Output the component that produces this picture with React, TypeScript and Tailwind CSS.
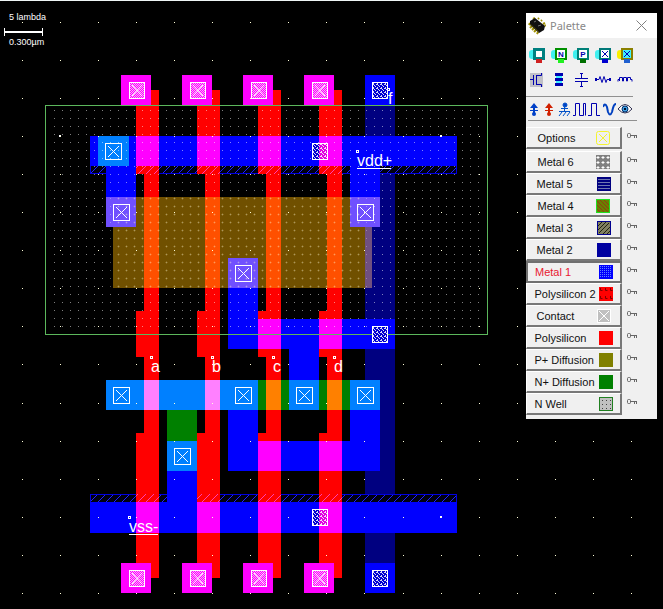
import React from "react";

type Box = [x: number, y: number, w: number, h: number, fill: string];

const COLUMNS = [0, 61, 122, 183];

const RED = "#ff0000";
const BLUE = "#0000ff";
const NAVY = "#000080";
const PINK = "#ff00ff";
const SKY = "#0080ff";
const VIOLET = "#7050ff";
const GREEN = "#008000";

const polysilicon: Box[] = COLUMNS.flatMap((dx): Box[] => [
  [136 + dx, 90, 23, 84, RED],
  [144 + dx, 174, 15, 137, RED],
  [136 + dx, 311, 23, 46, RED],
  [144 + dx, 357, 15, 76, RED],
  [136 + dx, 433, 23, 145, RED],
]);

const metal: Box[] = [
  [106, 166, 30, 31, BLUE],
  [350, 166, 30, 31, BLUE],
  [90, 136, 367, 30, BLUE],
  [228, 288, 30, 61, BLUE],
  [258, 319, 137, 30, BLUE],
  [289, 349, 30, 31, BLUE],
  [228, 410, 30, 61, BLUE],
  [258, 441, 122, 30, BLUE],
  [350, 410, 30, 31, BLUE],
  [167, 471, 30, 31, BLUE],
  [90, 502, 367, 31, BLUE],
  [365, 75, 30, 30, BLUE],
  [365, 563, 30, 30, BLUE],
];

const overlaps: Box[] = [
  ...COLUMNS.flatMap((dx): Box[] => [
    [121 + dx, 75, 30, 30, PINK],
    [121 + dx, 563, 30, 30, PINK],
    [136 + dx, 136, 23, 30, PINK],
    [136 + dx, 502, 23, 31, PINK],
  ]),
  [258, 319, 23, 30, PINK],
  [319, 319, 23, 30, PINK],
  [258, 441, 23, 30, PINK],
  [319, 441, 23, 30, PINK],
  [98, 136, 31, 30, SKY],
];

const diffusion: Box[] = [
  [113, 197, 259, 91, "#705000"],
  [365, 197, 7, 91, "#705080"],
  ...COLUMNS.map((dx): Box => [144 + dx, 197, 15, 91, "#ff5000"]),
  [106, 197, 30, 30, VIOLET],
  [350, 197, 30, 30, VIOLET],
  [228, 258, 30, 30, VIOLET],
  [106, 380, 274, 30, SKY],
  [258, 380, 31, 30, GREEN],
  [319, 380, 31, 30, GREEN],
  [144, 380, 15, 30, "#ff80ff"],
  [205, 380, 15, 30, "#ff80ff"],
  [266, 380, 15, 30, "#ff8000"],
  [327, 380, 15, 30, "#ff8000"],
  [167, 410, 30, 31, GREEN],
  [167, 441, 30, 30, SKY],
];

const contacts = [
  [105, 143], [113, 204], [357, 204], [235, 265],
  [113, 387], [235, 387], [296, 387], [357, 387], [174, 448],
];

const vias = [[372, 82], [312, 143], [372, 326], [312, 509], [372, 570]];

const pins = [
  { name: "a", x: 151, y: 357 },
  { name: "b", x: 212, y: 357 },
  { name: "c", x: 273, y: 357 },
  { name: "d", x: 334, y: 357 },
  { name: "f", x: 388, y: 89 },
  { name: "vdd+", x: 357, y: 151, line: 34 },
  { name: "vss-", x: 129, y: 517, line: 29 },
];

function dots(x0: number, y0: number, step: number, cols: number, rows: number) {
  let d = "";
  for (let r = 0; r < rows; r++)
    for (let c = 0; c < cols; c++)
      d += `M${Math.floor(x0 + c * step)} ${Math.floor(y0 + r * step)}h1v1h-1z`;
  return d;
}

function Boxes({ items }: { items: Box[] }) {
  return (
    <>
      {items.map(([x, y, width, height, fill], i) => (
        <rect key={i} x={x} y={y} width={width} height={height} fill={fill} />
      ))}
    </>
  );
}

function LayoutCanvas() {
  return (
    <svg
      className="block h-screen w-full font-['Liberation_Sans',Arial,sans-serif]"
      role="img"
      aria-label="Mask layout"
      shapeRendering="crispEdges"
    >
      <defs>
        <pattern id="hatch" width="8" height="8" patternUnits="userSpaceOnUse">
          <path d="M-1 9L9 -1" stroke="#2020ff" shapeRendering="auto" />
        </pattern>
        <pattern id="hatchRed" width="8" height="8" patternUnits="userSpaceOnUse">
          <path d="M-1 9L9 -1" stroke="#ff40b0" shapeRendering="auto" />
        </pattern>
        <pattern id="weave" width="2" height="2" patternUnits="userSpaceOnUse">
          <path d="M0 0h1v1h-1zM1 1h1v1h-1z" fill="#fff" fillOpacity=".65" />
        </pattern>
        <pattern id="twill" width="4" height="4" patternUnits="userSpaceOnUse">
          <path d="M0 0h2v1h-2zM2 1h1v1h-1zM3 2h1v1h-1zM1 3h1v1h-1z" fill="#fff" fillOpacity=".85" />
        </pattern>
        <pattern id="plus" x="5" y="5" width="8" height="8" patternUnits="userSpaceOnUse">
          <path d="M1 0h1v3h-1zM0 1h3v1h-3z" fill="#fff0a0" fillOpacity=".16" />
        </pattern>
      </defs>

      <rect width="100%" height="1" fill="#eef5f5" />
      <Boxes items={[[365, 105, 30, 458, NAVY]]} />
      <Boxes items={polysilicon} />

      {[166, 494].map((y) => (
        <g key={y}>
          <rect x="90" y={y} width="367" height="8" fill="#000010" />
          <rect x="90" y={y} width="367" height="8" fill="url(#hatch)" />
          {COLUMNS.map((dx) => (
            <g key={dx}>
              <rect x={136 + dx} y={y} width="23" height="8" fill={RED} />
              <rect x={136 + dx} y={y} width="23" height="8" fill="url(#hatchRed)" />
            </g>
          ))}
          <path d={`M90.5 ${y}v8M456.5 ${y}v8`} stroke="#0000e0" />
        </g>
      ))}
      <path d="M90 173.5H136M159 173.5H197M220 173.5H258M281 173.5H319M342 173.5H457" stroke="#0000e0" />
      <path d="M90 494.5H136M159 494.5H197M220 494.5H258M281 494.5H319M342 494.5H457" stroke="#0000e0" />

      <Boxes items={metal} />
      <Boxes items={overlaps} />
      <Boxes items={diffusion} />

      <rect x="113" y="197" width="252" height="91" fill="url(#plus)" />
      <path d={dots(54, 110, 8, 54, 11)} fill="#fff" fillOpacity=".5" />
      <path d={dots(54, 198, 8, 54, 12)} fill="#fff" fillOpacity=".3" />
      <path d={dots(54, 198, 8, 7, 12) + dots(374, 198, 8, 14, 12)} fill="#fff" fillOpacity=".3" />
      <path d={dots(54, 294, 8, 54, 5)} fill="#fff" fillOpacity=".5" />
      <path d={dots(22, 22, 38.1, 60, 40)} fill="#ffffd8" />
      <rect x="45.5" y="105.5" width="442" height="229" fill="none" stroke="#5cb85c" />
      <path d="M59 135h2v1h-1v1h-1zM440 135h2v1h-1v1h-1zM440 516h2v1h-1v1h-1z" fill="#fff" />

      {contacts.map(([x, y]) => (
        <g key={`${x}-${y}`} fill="none" stroke="#fff">
          <rect x={x + 0.5} y={y + 0.5} width="16" height="16" />
          <path d={`M${x + 3} ${y + 3}l11 11m0 -11l-11 11`} shapeRendering="auto" />
        </g>
      ))}
      {COLUMNS.flatMap((dx) =>
        [82, 570].map((y) => (
          <g key={`${dx}-${y}`} stroke="#fff">
            <rect x={129.5 + dx} y={y + 0.5} width="15" height="16" fill="url(#weave)" />
            <path d={`M${132 + dx} ${y + 3}l10 11m0 -11l-10 11`} shapeRendering="auto" />
          </g>
        )),
      )}
      {vias.map(([x, y]) => (
        <g key={`${x}-${y}`}>
          <rect x={x} y={y} width="7" height="16" fill="#0000d0" />
          <rect x={x + 7} y={y} width="9" height="16" fill={x === 312 ? "#e000e0" : "#0000d0"} />
          <rect x={x + 0.5} y={y + 0.5} width="15" height="16" fill="url(#twill)" stroke="#fff" />
        </g>
      ))}

      {pins.map(({ name, x, y, line }) => (
        <g key={name} fill="#fff">
          <rect x={x - 0.5} y={y - 0.5} width="2" height="2" fill="none" stroke="#fff" />
          <text x={x} y={y + 15} className="text-base">
            {name}
          </text>
          {line && <rect x={x} y={y + 17} width={line} height="1" />}
        </g>
      ))}

      <g fill="#fff" className="text-[9px]">
        <text x="9" y="20">5 lambda</text>
        <text x="9" y="45">0.300µm</text>
        <path d="M4 28h1v3h37v-3h1v8h-1v-3H5v3H4z" />
      </g>
    </svg>
  );
}

const INK = "#0000b0";

function MacroIcon({ body, left, foot, letter, core = "#fff" }: {
  body: string; left: string; foot: string; letter?: string; core?: string;
}) {
  return (
    <svg width="16" height="16" aria-hidden="true">
      <rect x="0" y="2" width="7" height="9" rx="3" fill={left} />
      <rect x="4" y="0" width="12" height="12" fill={body} />
      <rect x="7" y="11" width="6" height="4" fill={foot} />
      {letter === undefined ? (
        <rect x="7" y="3" width="6" height="6" fill={core} />
      ) : (
        <rect x="6" y="2" width="8" height="8" fill={core} />
      )}
      {letter === "X" && <path d="M7 3l6 6m0-6l-6 6" stroke={INK} />}
      {letter && letter !== "X" && (
        <text x="10" y="9" textAnchor="middle" fill={INK} className="font-['Liberation_Sans',Arial,sans-serif] text-[8px] font-bold">
          {letter}
        </text>
      )}
    </svg>
  );
}

function LineIcon({ d, children, width = 16, stroke = INK }: {
  d?: string; children?: React.ReactNode; width?: number; stroke?: string;
}) {
  return (
    <svg width={width} height="16" fill="none" stroke={stroke} aria-hidden="true">
      {children}
      {d && <path d={d} />}
    </svg>
  );
}

const macros = [
  { label: "Contact N/metal", icon: <MacroIcon body="#008080" left="#40f0f0" foot="#d02020" /> },
  { label: "N transistor contact", icon: <MacroIcon body="#009000" left="#40f0f0" foot="#20f020" letter="N" /> },
  { label: "P transistor contact", icon: <MacroIcon body="#008078" left="#40f0f0" foot="#007000" letter="P" /> },
  { label: "Via", icon: <MacroIcon body="#007878" left="#40f0f0" foot="#0000d0" letter="X" /> },
  { label: "Stacked contacts", icon: <MacroIcon body="#8a8000" left="#f8f000" foot="#2060d0" letter="X" core="#40f0ff" /> },
];

const devices = [
  {
    label: "MOS generator",
    icon: (
      <LineIcon d="M1 7.500H4.500M4.500 3v10M7.500 3v10M12.500 1v2.500H8M8 12.500h4.500V15">
        <rect x="1" y="1" width="13" height="14" fill="#c0c0c8" stroke="none" />
      </LineIcon>
    ),
  },
  {
    label: "Path generator",
    icon: (
      <LineIcon>
        <g stroke="none">
          <rect x="5" y="1" width="6" height="13" fill="#40f0ff" />
          <path d="M4 1h8v3H4zM4 6h8v3H4zM4 11h8v3H4z" fill={INK} />
        </g>
      </LineIcon>
    ),
  },
  { label: "Capacitor", icon: <LineIcon d="M8.500 1v5M2 6.500h13M2 9.500h13M8.500 10v5M7 1.500h3M7 14.500h3" /> },
  { label: "Resistor", icon: <LineIcon d="M0 7.500h4l1 -3l2 6l2 -6l2 6l1 -3h4M0 6.500h2M14 6.500h2M0 8.500h2M14 8.500h2" /> },
  { label: "Inductor", icon: <LineIcon d="M1 9.500v-2h1.500M2.500 9V5.500h3V9h1V5.500h3V9h1V5.500h3V7.500h1.500v2" /> },
];

function Supply({ color }: { color: string }) {
  return (
    <LineIcon width={14} stroke={color}>
      <g fill={color} stroke="none">
        <path d="M6 2l4 5H7v2h3v1H7v2H5v-2H2V9h3V7H2z" />
        <circle cx="6" cy="13" r="2" />
      </g>
    </LineIcon>
  );
}

const stimuli = [
  { label: "VDD supply", icon: <Supply color="#0040c8" /> },
  { label: "VDD high supply", icon: <Supply color="#d02000" /> },
  {
    label: "Ground",
    icon: (
      <LineIcon width={14} stroke="#0050c8" d="M6.500 4v6M1 10.500h11M4 11l-3 4M8 11l-3 4M12 11l-3 4M3 7.500h7">
        <circle cx="7" cy="4" r="2" fill="#0040c8" />
      </LineIcon>
    ),
  },
  { label: "Clock", icon: <LineIcon width={14} d="M0 14.500h2.500v-12h4v12h4v-12h2v12" /> },
  { label: "Pulse", icon: <LineIcon width={14} d="M0 14.500h3.500v-12h5v12H12" /> },
  {
    label: "Sinus",
    icon: (
      <LineIcon width={14}>
        <path d="M0 6q2 -5 4 0l1 5q2 5 4 0l1 -4q1 -4 3 -4" stroke="#0040c0" strokeWidth="2" />
      </LineIcon>
    ),
  },
  {
    label: "Visible",
    icon: (
      <LineIcon width={14}>
        <path d="M0 8q7 -9 14 0q-7 8 -14 0z" fill="#fff" stroke="#303050" />
        <circle cx="7" cy="8" r="3" fill="#40a0e0" stroke="#003070" />
        <rect x="6" y="7" width="2" height="2" fill="#001030" stroke="none" />
      </LineIcon>
    ),
  },
];

const swatches: Record<string, React.ReactNode> = {
  Options: (
    <g fill="none" stroke="#f4f430">
      <rect x=".5" y=".5" width="13" height="13" rx="2" />
      <path d="M3 3l8 8m0-8l-8 8" />
    </g>
  ),
  "Metal 6": (
    <>
      <rect width="14" height="14" fill="#808080" />
      <path d="M2 1v3M.5 2.500h3M7 1v3M5.500 2.500h3M12 1v3M10.500 2.500h3M2 6v3M.5 7.500h3M7 6v3M5.500 7.500h3M12 6v3M10.500 7.500h3M2 11v3M.5 12.500h3M7 11v3M5.500 12.500h3M12 11v3M10.500 12.500h3" stroke="#fff" />
    </>
  ),
  "Metal 5": (
    <>
      <rect width="14" height="14" fill="#000080" />
      <path d="M1 2.500h12M1 5.500h12M1 8.500h12M1 11.500h12" stroke="#7078b0" />
    </>
  ),
  "Metal 4": (
    <>
      <rect x=".5" y=".5" width="13" height="13" fill="#6a8000" stroke="#20e020" />
      <path d="M1 10l3 3M1 6l7 7M1 2l11 11M4 1l9 9M8 1l5 5" stroke="#904010" />
    </>
  ),
  "Metal 3": (
    <>
      <rect x=".5" y=".5" width="13" height="13" fill="#808060" stroke="#000090" />
      <path d="M1 5l4-4M1 9l8-8M2 12L12 2M6 13l7-7M10 13l3-3" stroke="#202010" />
    </>
  ),
  "Metal 2": <rect width="14" height="14" fill="#0000a0" />,
  "Metal 1": (
    <>
      <rect width="14" height="14" fill="#0000ff" />
      <path d={dots(1, 1, 2, 6, 6)} fill="#6080ff" />
    </>
  ),
  "Polysilicon 2": (
    <>
      <rect width="14" height="14" fill="#ff0000" />
      <path d="M1.500 1v2.500h2M6.500 1v2.500h2M11.500 1v2.500h2M1.500 9v2.500h2M6.500 9v2.500h2M11.500 9v2.500h2" stroke="#800000" fill="none" />
    </>
  ),
  Contact: (
    <>
      <rect x="1" y="1" width="12" height="12" fill="#c0c0c0" />
      <path d="M2 2l10 10m0-10L2 12M.5 .5h13v13H.5z" stroke="#fff" fill="none" />
    </>
  ),
  Polysilicon: <rect width="14" height="14" fill="#ff0000" />,
  "P+ Diffusion": <rect width="14" height="14" fill="#808000" />,
  "N+ Diffusion": <rect width="14" height="14" fill="#008000" />,
  "N Well": (
    <>
      <rect x=".5" y=".5" width="13" height="13" fill="#c0c0c0" stroke="#208020" />
      <path d={dots(3, 3, 4, 3, 3)} fill="#404040" />
    </>
  ),
};

const layers = [
  { name: "Metal 6", width: "w-[72px]" },
  { name: "Metal 5", width: "w-[74px]" },
  { name: "Metal 4", width: "w-[72px]" },
  { name: "Metal 3", width: "w-[74px]" },
  { name: "Metal 2", width: "w-[74px]" },
  { name: "Metal 1", width: "w-[78px]" },
  { name: "Polysilicon 2", width: "w-[78px]" },
  { name: "Contact", width: "w-[74px]" },
  { name: "Polysilicon", width: "w-[78px]" },
  { name: "P+ Diffusion", width: "w-[78px]" },
  { name: "N+ Diffusion", width: "w-[78px]" },
  { name: "N Well", width: "w-[78px]" },
];

function LayerRow({ name, width, active }: { name: string; width: string; active?: boolean }) {
  return (
    <li className="flex items-start">
      <button
        type="button"
        aria-pressed={!!active}
        className={
          "flex h-[22px] w-24 shrink-0 items-center justify-center " +
          (active
            ? "border-2 border-[#707070] text-[#e81830]"
            : "border-t border-r-2 border-b-2 border-l border-t-white border-r-[#787878] border-b-[#787878] border-l-white text-[#101010]")
        }
      >
        <span className={"flex items-center justify-between " + width}>
          <span className="whitespace-nowrap">{name}</span>
          <svg width="14" height="14" className="shrink-0" aria-hidden="true">
            {swatches[name]}
          </svg>
        </span>
      </button>
      <button type="button" aria-label={`Lock ${name}`} className="ml-0.5 flex h-[18px] w-4 items-center justify-center">
        <svg width="10" height="6" fill="none" stroke="#666" aria-hidden="true">
          <rect x=".5" y=".5" width="3" height="4" rx="1" />
          <path d="M4 2.500h6M7.500 3v2M9.500 3v2" />
        </svg>
      </button>
    </li>
  );
}

function Palette() {
  return (
    <aside
      aria-label="Palette"
      className="absolute top-[13px] right-[6px] w-[131px] bg-[#f0f0f0] pb-1 font-['Liberation_Sans',Arial,sans-serif] text-[11px] leading-4"
    >
      <header className="flex h-[25px] items-center bg-white pr-2.5 pl-0.5">
        <svg width="18" height="18" aria-hidden="true">
          <path d="M2 6l-1 2M4 9l-2 2M6 11l-2 2M8 13l-2 2M10 15l-1 2M7 1l-2 1M10 2l1-1M13 4l1-1M15 7l2-1M17 9l1-1" stroke="#a09000" strokeWidth="2" />
          <path d="M2 4l5-3l10 8l-1 4l-5 3L2 8z" fill="#101010" />
          <path d="M6 5l2-1M10 9l3-1" stroke="#707070" />
          <path d="M2 7l9 8" stroke="#504800" />
        </svg>
        <h1 className="ml-1 grow font-['Noto_Sans','Open_Sans',sans-serif] text-[11px] text-[#888888]">Palette</h1>
        <button type="button" aria-label="Close">
          <svg width="11" height="11" stroke="#808080" aria-hidden="true">
            <path d="M.5 .5l10 10m0-10l-10 10" />
          </svg>
        </button>
      </header>

      <div className="pt-1.5">
        {[macros, devices].map((row, i) => (
          <div key={i} className="flex h-6">
            {row.map(({ label, icon }) => (
              <button key={label} type="button" aria-label={label} className="flex w-[22px] items-center justify-center">
                {icon}
              </button>
            ))}
          </div>
        ))}
      </div>
      <div className="mt-1 mr-6 h-px bg-[#909090]" />
      <div className="flex h-[23px] pt-1 pl-0.5">
        {stimuli.map(({ label, icon }) => (
          <button key={label} type="button" aria-label={label} className="flex w-[15px] items-start">
            {icon}
          </button>
        ))}
      </div>
      <div className="mr-5 ml-0.5 h-px bg-[#909090]" />

      <ul className="mt-1.5">
        <LayerRow name="Options" width="w-[72px]" />
      </ul>
      <ul className="mt-0.5">
        {layers.map(({ name, width }) => (
          <LayerRow key={name} name={name} width={width} active={name === "Metal 1"} />
        ))}
      </ul>
    </aside>
  );
}

export default function App() {
  return (
    <main className="relative min-h-screen overflow-hidden bg-black">
      <LayoutCanvas />
      <Palette />
    </main>
  );
}
